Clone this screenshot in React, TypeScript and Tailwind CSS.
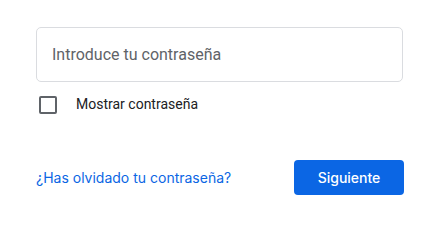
import React from "react";

export default function App() {
  return (
    <div className="h-[238px] w-[441px] bg-white pl-[36px] pr-[37px] pt-[27px]">
      <div className="mr-[1px] flex h-[55px] items-center rounded-[5px] border border-[#dadce0] px-[15px]">
        <span className="font-['Roboto',sans-serif] text-[16px] text-[#5f6368]">
          Introduce tu contraseña
        </span>
      </div>
      <label className="mt-[12px] flex items-center">
        <span className="ml-[3px] h-[18px] w-[18px] rounded-[2px] border-2 border-[#5f6368]" />
        <span className="ml-[19px] font-['Roboto',sans-serif] text-[14px] text-[#202124]">
          Mostrar contraseña
        </span>
      </label>
      <div className="mt-[45px] flex items-center justify-between">
        <a className="font-['Inter',sans-serif] text-[14px] font-normal text-[#0b66e4]">
          ¿Has olvidado tu contraseña?
        </a>
        <button className="flex h-[35px] w-[110px] items-center justify-center rounded-[4px] bg-[#0b66e4] font-['Inter',sans-serif] text-[14px] font-medium text-white">
          Siguiente
        </button>
      </div>
    </div>
  );
}
